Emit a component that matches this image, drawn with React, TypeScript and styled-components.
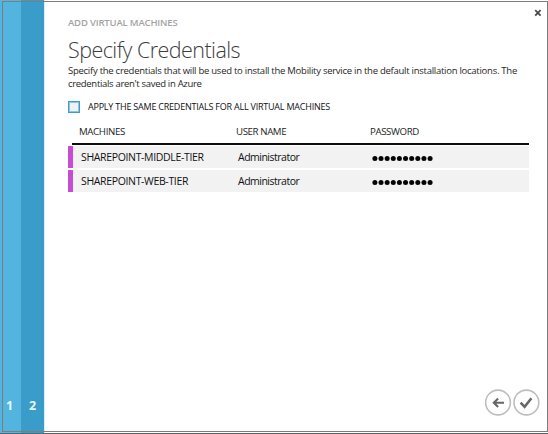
import React from 'react';
import styled, { createGlobalStyle } from 'styled-components';

const GlobalStyle = createGlobalStyle`
  * { box-sizing: border-box; }
  body { margin: 0; background: #fff; font-family: 'Open Sans', 'Noto Sans', sans-serif; }
`;

const Page = styled.div`
  position: relative;
  display: flex;
  width: 548px;
  height: 434px;
  background: #fff;
  border-bottom: 1px solid #5c6468;
  overflow: hidden;
`;

const Frame = styled.div`
  position: absolute;
  inset: 1px 0 1px 2px;
  border: 1px solid #7d7d7d;
  pointer-events: none;
`;

const Step = styled.div<{ $width: number; $color: string; $inset: number }>`
  display: flex;
  flex: none;
  align-items: flex-end;
  width: ${p => p.$width}px;
  padding: 0 0 19px ${p => p.$inset}px;
  background: ${p => p.$color};
  color: #e9f7fd;
  font-size: 12.5px;
  font-weight: 700;
  line-height: 16px;
`;

const Content = styled.main`
  flex: 1;
  min-width: 0;
  display: flex;
  flex-direction: column;
  padding: 16px 19px 0 23px;
  border-left: 1px solid #d5effa;
`;

const Text = styled.span<{ $spacing?: number }>`
  letter-spacing: ${p => p.$spacing ?? 0}px;
  white-space: nowrap;
`;

const Eyebrow = styled.div`
  height: 14px;
  line-height: 14px;
  font-size: 9.5px;
  font-weight: 600;
  color: #a3a3a3;
`;

const Title = styled.h1`
  margin: 5px 0 0;
  height: 29px;
  line-height: 29px;
  font-size: 21.5px;
  font-weight: 300;
  color: #3c3c3c;
`;

const Description = styled.p`
  display: flex;
  flex-direction: column;
  margin: 0;
  font-size: 9.5px;
  line-height: 13px;
  color: #262626;
`;

const CheckRow = styled.label`
  display: flex;
  align-items: center;
  gap: 8px;
  height: 13px;
  margin-top: 10px;
  font-size: 9px;
  color: #111;
`;

const Box = styled.span`
  width: 12px;
  height: 12px;
  border: 1px solid #3f9ccb;
  background: #f1f1f1;
  box-shadow: inset 0 0 0 1px #8cc5e3;
`;

const Row = styled.div`
  display: grid;
  grid-template-columns: 157px 134px 1fr;
  align-items: center;
`;

const HeaderRow = styled(Row)`
  height: 25px;
  margin: 7px 0 -1px 4px;
  padding: 0 0 1px 7px;
  border-bottom: 2px solid #0c0c0c;
  font-size: 9.7px;
  color: #1c1c1c;
`;

const Machine = styled(Row)`
  height: 22px;
  margin-top: 2px;
  padding-left: 8px;
  border-left: 5px solid #c84bd6;
  background: #f2f2f2;
  font-size: 10.5px;
  color: #111;
`;

const Dots = styled.svg`
  display: block;
`;

const Close = styled.button`
  position: absolute;
  top: 9px;
  right: 6px;
  width: 8px;
  height: 8px;
  padding: 0;
  border: 0;
  background: none;
  svg { display: block; }
`;

const Actions = styled.div`
  display: flex;
  justify-content: flex-end;
  gap: 1px;
  margin: auto -11px 17px 0;
`;

const Action = styled.button`
  width: 27px;
  height: 27px;
  padding: 0;
  border: 0;
  background: none;
  svg { display: block; }
`;

const machines = ['SHAREPOINT-MIDDLE-TIER', 'SHAREPOINT-WEB-TIER'];

function Password() {
  return (
    <Dots width="64" height="8" viewBox="0 0 64 8" aria-label="Password">
      {Array.from({ length: 10 }, (_, i) => (
        <circle key={i} cx={2.9 + i * 6.13} cy="5.5" r="2.5" fill="#050505" />
      ))}
    </Dots>
  );
}

export default function App() {
  return (
    <>
      <GlobalStyle />
      <Page>
        <Step $width={21} $color="#52b4df" $inset={6}>1</Step>
        <Step $width={23} $color="#3a9cc8" $inset={8}>2</Step>
        <Content>
          <Eyebrow><Text $spacing={-0.17}>ADD VIRTUAL MACHINES</Text></Eyebrow>
          <Title><Text $spacing={-0.55}>Specify Credentials</Text></Title>
          <Description>
            <Text $spacing={-0.26}>Specify the credentials that will be used to install the Mobility service in the default installation locations. The</Text>
            <Text $spacing={-0.31}>credentials aren't saved in Azure</Text>
          </Description>
          <CheckRow>
            <Box />
            <Text $spacing={-0.22}>APPLY THE SAME CREDENTIALS FOR ALL VIRTUAL MACHINES</Text>
          </CheckRow>
          <HeaderRow>
            <Text $spacing={-0.36}>MACHINES</Text>
            <Text $spacing={-0.4}>USER NAME</Text>
            <Text $spacing={-0.4}>PASSWORD</Text>
          </HeaderRow>
          {machines.map(name => (
            <Machine key={name}>
              <Text $spacing={-0.35}>{name}</Text>
              <Text $spacing={-0.5}>Administrator</Text>
              <Password />
            </Machine>
          ))}
          <Actions>
            <Action aria-label="Back">
              <svg width="27" height="27" viewBox="0 0 27 27" fill="none">
                <circle cx="13" cy="13.5" r="12.4" stroke="#bdbdbd" strokeWidth="1.6" />
                <path d="M19 13.8H9.5M13.1 9.6 8.8 13.8l4.3 4.2" stroke="#666" strokeWidth="2.1" />
              </svg>
            </Action>
            <Action aria-label="Complete">
              <svg width="27" height="27" viewBox="0 0 27 27" fill="none">
                <circle cx="13.4" cy="13.5" r="12.4" stroke="#bdbdbd" strokeWidth="1.6" />
                <path d="M7.6 13.7l4 4.2 6.8-8.6" stroke="#666" strokeWidth="2.5" />
              </svg>
            </Action>
          </Actions>
        </Content>
        <Close aria-label="Close">
          <svg width="8" height="8" viewBox="0 0 8 8">
            <path d="M1.2 1.2l5.4 5.4M6.6 1.2L1.2 6.6" stroke="#4a4a4a" strokeWidth="1.8" />
          </svg>
        </Close>
        <Frame />
      </Page>
    </>
  );
}
